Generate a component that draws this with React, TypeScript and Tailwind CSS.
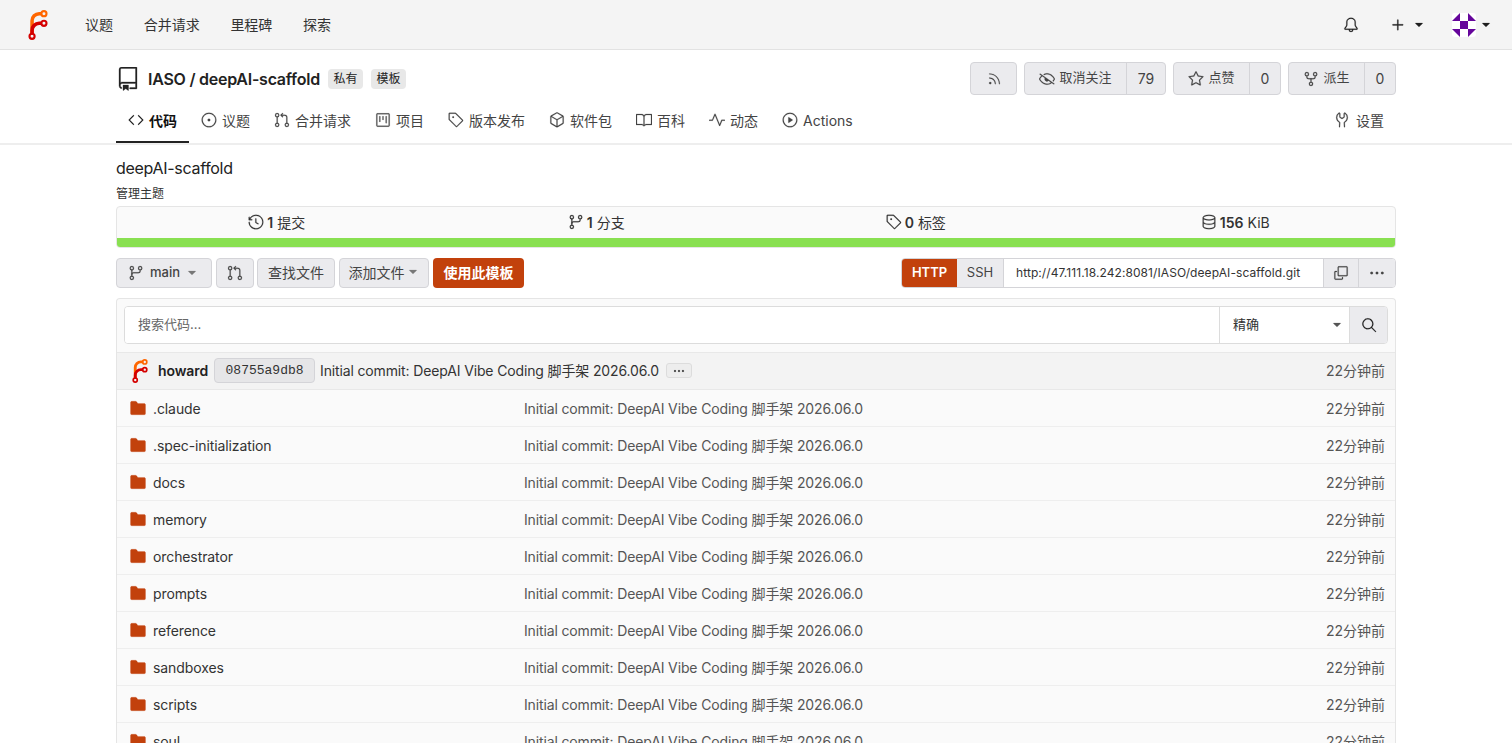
import type { ReactNode } from "react";
import {
  GoBell,
  GoBook,
  GoCode,
  GoCopy,
  GoDatabase,
  GoEyeClosed,
  GoFileDirectoryFill,
  GoGitBranch,
  GoGitPullRequest,
  GoHistory,
  GoIssueOpened,
  GoKebabHorizontal,
  GoPackage,
  GoPlay,
  GoPlus,
  GoProject,
  GoPulse,
  GoRepo,
  GoRepoForked,
  GoRss,
  GoSearch,
  GoStar,
  GoTag,
  GoTools,
  GoTriangleDown,
} from "react-icons/go";

const COMMIT_MSG = "Initial commit: DeepAI Vibe Coding 脚手架 2026.06.0";

const TABS = [
  { label: "代码", icon: GoCode, active: true },
  { label: "议题", icon: GoIssueOpened },
  { label: "合并请求", icon: GoGitPullRequest },
  { label: "项目", icon: GoProject },
  { label: "版本发布", icon: GoTag },
  { label: "软件包", icon: GoPackage },
  { label: "百科", icon: GoBook },
  { label: "动态", icon: GoPulse },
  { label: "Actions", icon: GoPlay },
];

const FOLDERS = [
  ".claude",
  ".spec-initialization",
  "docs",
  "memory",
  "orchestrator",
  "prompts",
  "reference",
  "sandboxes",
  "scripts",
  "soul",
];

function Logo({ size }: { size: number }) {
  return (
    <svg width={size} height={size} viewBox="0 0 212 212" className="shrink-0">
      <g transform="translate(6 6)" fill="none">
        <path d="M58 168V70a50 50 0 0 1 50-50h20" stroke="#ff6600" strokeWidth="25" />
        <path d="M58 168v-30a50 50 0 0 1 50-50h20" stroke="#d40000" strokeWidth="25" />
        <circle cx="142" cy="20" r="18" stroke="#ff6600" strokeWidth="15" />
        <circle cx="142" cy="88" r="18" stroke="#d40000" strokeWidth="15" />
        <circle cx="58" cy="180" r="18" stroke="#d40000" strokeWidth="15" />
      </g>
    </svg>
  );
}

function Identicon() {
  return (
    <svg width="24" height="24" viewBox="0 0 24 24" className="rounded-[3px] bg-white">
      <g fill="#65059b">
        <rect x="8" y="8" width="8" height="8" />
        <path d="M0 8l8-8v8zM16 0l8 8h-8zM0 16h8v8zM16 16h8l-8 8z" />
      </g>
    </svg>
  );
}

function Btn({ className = "", children }: { className?: string; children: ReactNode }) {
  return (
    <div
      className={`flex items-center justify-center rounded-[4px] border border-[#d4d4d8] bg-[#ebebee] text-[#444] ${className}`}
    >
      {children}
    </div>
  );
}

function CountBtn({
  icon,
  label,
  count,
  w,
  total,
}: {
  icon: ReactNode;
  label: string;
  count: string;
  w: string;
  total: string;
}) {
  return (
    <div className={`flex h-[33px] items-stretch rounded-[4px] border border-[#d4d4d8] bg-[#ebebee] text-[#444] ${total}`}>
      <div className={`flex items-center justify-center gap-[4px] border-r border-[#d4d4d8] text-[13px] ${w}`}>
        {icon}
        <span className="pb-[2px]">{label}</span>
      </div>
      <div className="flex flex-1 items-center justify-center text-[14px]">{count}</div>
    </div>
  );
}

function Stat({ icon, value, unit }: { icon: ReactNode; value: string; unit: string }) {
  return (
    <div className="flex items-center justify-center gap-[3px] pb-[1px] text-[14px] text-[#333]">
      {icon}
      <b className="font-semibold">{value}</b>
      <span className="ml-[1px]">{unit}</span>
    </div>
  );
}

export default function App() {
  return (
    <div className="h-[743px] overflow-hidden bg-white font-['Inter','Noto_Sans_CJK_SC',sans-serif] [&_svg]:[stroke-width:0.3px]">
      <nav className="flex h-[50px] items-center border-b border-[#e2e2e2] bg-[#f4f4f4] pl-[23px] pr-[19px]">
        <Logo size={30} />
        <div className="ml-[32px] flex gap-[30.7px] text-[14px] text-[#333]">
          <span>议题</span>
          <span>合并请求</span>
          <span>里程碑</span>
          <span>探索</span>
        </div>
        <div className="ml-auto flex items-center text-[#1f1f1f]">
          <GoBell size={16} />
          <GoPlus size={18} className="ml-[30px]" />
          <GoTriangleDown size={14} className="ml-[5px]" />
          <div className="ml-[26px]">
            <Identicon />
          </div>
          <GoTriangleDown size={14} className="ml-[3px]" />
        </div>
      </nav>

      <div className="border-b-2 border-[#eeeeee]">
        <div className="mx-auto w-[1280px]">
          <div className="flex h-[45px] items-end justify-between">
            <div className="flex h-[33px] items-center">
              <GoRepo size={24} className="text-[#222]" />
              <h1 className="ml-[8px] text-[16px] font-semibold tracking-[-0.25px] text-[#222]">IASO / deepAI-scaffold</h1>
              <span className="ml-[8px] rounded-[4px] bg-[#e8e8e8] px-[5.5px] py-[2px] text-[12px] leading-[16px] text-[#222]">
                私有
              </span>
              <span className="ml-[8px] rounded-[4px] bg-[#e8e8e8] px-[5.5px] py-[2px] text-[12px] leading-[16px] text-[#222]">
                模板
              </span>
            </div>
            <div className="flex gap-[7px]">
              <Btn className="h-[33px] w-[47px]">
                <GoRss size={14} />
              </Btn>
              <CountBtn icon={<GoEyeClosed size={16} />} label="取消关注" count="79" w="w-[102px]" total="w-[142px]" />
              <CountBtn icon={<GoStar size={16} />} label="点赞" count="0" w="w-[76px]" total="w-[108px]" />
              <CountBtn icon={<GoRepoForked size={16} />} label="派生" count="0" w="w-[76px]" total="w-[108px]" />
            </div>
          </div>
          <div className="mt-[4px] flex h-[44px] text-[14px] text-[#444]">
            {TABS.map((t) => {
              const Icon = t.icon;
              return (
                <div
                  key={t.label}
                  className={`flex items-center gap-[5px] border-b-2 px-[12px] ${
                    t.active ? "border-[#222] font-semibold text-[#111]" : "border-transparent"
                  }`}
                >
                  <Icon size={16} />
                  <span>{t.label}</span>
                </div>
              );
            })}
            <div className="ml-auto flex items-center gap-[6px] border-b-2 border-transparent pr-[12px]">
              <GoTools size={16} />
              <span>设置</span>
            </div>
          </div>
        </div>
      </div>

      <main className="mx-auto w-[1280px] pt-[12px]">
        <p className="text-[16px] leading-[22px] tracking-[-0.3px] text-[#222]">deepAI-scaffold</p>
        <p className="mt-[7px] text-[12px] leading-[16px] text-[#333]">管理主题</p>

        <div className="mt-[4px] overflow-hidden rounded-[4px] border border-[#e5e5e5] bg-[#fafafa]">
          <div className="grid h-[31px] grid-cols-4 items-center">
            <Stat icon={<GoHistory size={16} />} value="1" unit="提交" />
            <Stat icon={<GoGitBranch size={16} />} value="1" unit="分支" />
            <Stat icon={<GoTag size={16} />} value="0" unit="标签" />
            <Stat icon={<GoDatabase size={16} />} value="156" unit="KiB" />
          </div>
          <div className="h-[9px] bg-[#89e051]" />
        </div>

        <div className="mt-[10px] flex h-[30px] items-stretch">
          <Btn className="w-[96px] justify-start pl-[11px] text-[13px] font-medium">
            <GoGitBranch size={16} />
            <span className="ml-[6px]">main</span>
            <GoTriangleDown size={14} className="ml-[5px] text-[#777]" />
          </Btn>
          <Btn className="ml-[4px] w-[38px]">
            <GoGitPullRequest size={16} />
          </Btn>
          <Btn className="ml-[3px] w-[78px] pb-[2px] text-[14px]">查找文件</Btn>
          <Btn className="ml-[4px] w-[90px] pb-[2px] text-[14px]">
            添加文件
            <GoTriangleDown size={14} className="ml-[1px] text-[#777]" />
          </Btn>
          <div className="ml-[4px] flex w-[91px] items-center justify-center rounded-[4px] bg-[#c2410c] pb-[2px] text-[14px] font-semibold text-white">
            使用此模板
          </div>

          <div className="ml-auto flex w-[495px] overflow-hidden rounded-[4px] border border-[#d4d4d8] text-[#444]">
            <div className="flex w-[55px] items-center justify-center bg-[#c2410c] text-[13px] font-semibold text-white">
              HTTP
            </div>
            <div className="flex w-[47px] items-center justify-center border-r border-[#d4d4d8] bg-[#ebebee] text-[13px]">
              SSH
            </div>
            <div className="flex flex-1 items-center bg-white pl-[12px] text-[12px] tracking-[0.08px] text-[#333]">
              http://47.111.18.242:8081/IASO/deepAI-scaffold.git
            </div>
            <div className="flex w-[36px] items-center justify-center border-x border-[#d4d4d8] bg-[#ebebee]">
              <GoCopy size={16} />
            </div>
            <div className="flex w-[36px] items-center justify-center bg-[#ebebee]">
              <GoKebabHorizontal size={16} />
            </div>
          </div>
        </div>

        <div className="mt-[10px] rounded-t-[4px] border-x border-t border-[#e5e5e5] bg-[#fafafa]">
          <div className="flex p-[7px] pb-[8px]">
            <div className="flex h-[38px] flex-1 overflow-hidden rounded-[4px] border border-[#dcdcdc] bg-white">
              <input
                readOnly
                placeholder="搜索代码..."
                className="min-w-0 flex-1 bg-white pl-[13px] text-[13px] outline-none placeholder:text-[#666]"
              />
              <div className="flex w-[130px] items-center justify-between border-l border-[#dcdcdc] pl-[13px] pr-[5px] text-[13px] text-[#333]">
                <span>精确</span>
                <GoTriangleDown size={14} className="text-[#555]" />
              </div>
              <div className="flex w-[38px] items-center justify-center border-l border-[#dcdcdc] bg-[#ebebee] text-[#222]">
                <GoSearch size={16} />
              </div>
            </div>
          </div>

          <div className="flex h-[38px] items-center border-y border-[#e8e8e8] bg-[#f3f3f3] pb-[1px] pl-[11px] pr-[10px]">
            <Logo size={24} />
            <span className="ml-[6px] text-[14px] font-semibold tracking-[-0.1px] text-[#222]">howard</span>
            <span className="ml-[6px] flex h-[25px] w-[101px] items-center justify-center rounded-[4px] border border-[#d4d4d8] bg-[#e6e6e8] font-['Liberation_Mono',monospace] text-[13px] text-[#333]">
              08755a9db8
            </span>
            <span className="ml-[5px] text-[14px] tracking-[-0.14px] text-[#333]">{COMMIT_MSG}</span>
            <span className="ml-[7px] flex h-[15px] w-[26px] items-center justify-center rounded-[3px] border border-[#dcdcdc] bg-[#ededed] text-[#333]">
              <GoKebabHorizontal size={12} />
            </span>
            <span className="ml-auto text-[14px] text-[#555]">22分钟前</span>
          </div>

          {FOLDERS.map((name) => (
            <div key={name} className="flex h-[37px] items-center border-b border-[#eeeeee] pl-[12px] pr-[10px]">
              <div className="flex w-[395px] items-center gap-[6px]">
                <GoFileDirectoryFill size={18} className="text-[#c2410c]" />
                <span className="text-[14px] tracking-[-0.1px] text-[#333]">{name}</span>
              </div>
              <span className="text-[14px] tracking-[-0.14px] text-[#555]">{COMMIT_MSG}</span>
              <span className="ml-auto text-[14px] text-[#555]">22分钟前</span>
            </div>
          ))}
        </div>
      </main>
    </div>
  );
}
